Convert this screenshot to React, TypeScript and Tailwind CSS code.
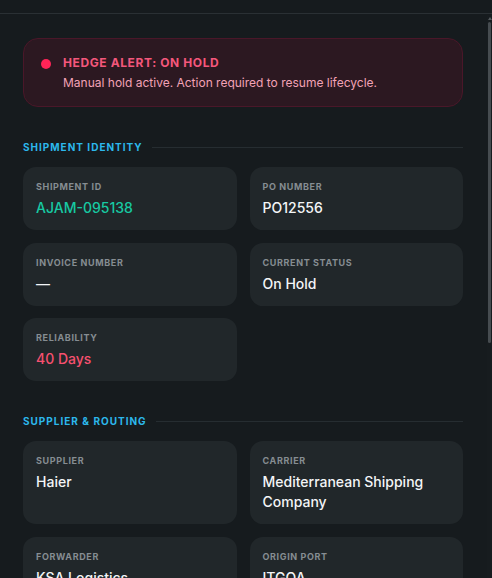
import React from "react";

type Field = {
  label: string;
  value: string;
  tone?: "teal" | "red";
};

const identity: (Field | null)[] = [
  { label: "Shipment ID", value: "AJAM-095138", tone: "teal" },
  { label: "PO Number", value: "PO12556" },
  { label: "Invoice Number", value: "—" },
  { label: "Current Status", value: "On Hold" },
  { label: "Reliability", value: "40 Days", tone: "red" },
];

const routing: Field[] = [
  { label: "Supplier", value: "Haier" },
  { label: "Carrier", value: "Mediterranean Shipping Company" },
  { label: "Forwarder", value: "KSA Logistics" },
  { label: "Origin Port", value: "ITGOA" },
  { label: "Destination Port", value: "SAJED" },
  { label: "Vessel", value: "MSC Aurora" },
];

function SectionHeading({ title }: { title: string }) {
  return (
    <div className="flex items-center gap-[9px]">
      <h3 className="shrink-0 text-[10px] leading-[14px] font-bold uppercase tracking-[0.1em] text-[#2cb8ec]">
        {title}
      </h3>
      <div className="h-px flex-1 bg-[#262d31]" />
    </div>
  );
}

function InfoCard({ label, value, tone }: Field) {
  const valueColor =
    tone === "teal"
      ? "text-[#17c9a2]"
      : tone === "red"
        ? "text-[#f7506f]"
        : "text-[#f3f5f7]";
  return (
    <div className="rounded-[13px] bg-[#21272a] px-[13px] pt-[14px] pb-[12px]">
      <p className="text-[9px] leading-[12px] font-bold uppercase tracking-[0.07em] text-[#868d92]">
        {label}
      </p>
      <p className={`mt-[5px] text-[14px] leading-[20px] font-medium ${valueColor}`}>
        {value}
      </p>
    </div>
  );
}

export default function App() {
  return (
    <div
      className="relative h-[578px] w-[492px] overflow-hidden bg-[#161b1e]"
      style={{ fontFamily: "Inter, 'Noto Sans', sans-serif" }}
    >
      <div className="h-[14px] border-b border-[#2a3034]" />

      <div className="pl-[23px] pr-[29px] pt-[24px]">
        <div className="flex items-start gap-[12px] rounded-[15px] border border-[#4a1729] bg-[#2c1821] pl-[17px] pr-4 pt-[16px] pb-[14px]">
          <span className="mt-[4px] size-[10px] shrink-0 rounded-full bg-[#ff2457]" />
          <div>
            <p className="text-[12px] leading-[16px] font-bold uppercase tracking-[0.05em] text-[#f4577c]">
              Hedge Alert: On Hold
            </p>
            <p className="mt-[3px] text-[12px] leading-[18px] text-[#f2a2b6]">
              Manual hold active. Action required to resume lifecycle.
            </p>
          </div>
        </div>

        <section className="mt-[33px]">
          <SectionHeading title="Shipment Identity" />
          <div className="mt-[13px] grid grid-cols-2 gap-x-[13px] gap-y-[12.5px]">
            {identity.map((f, i) =>
              f ? <InfoCard key={i} {...f} /> : <div key={i} />
            )}
          </div>
        </section>

        <section className="mt-[33px]">
          <SectionHeading title="Supplier & Routing" />
          <div className="mt-[13px] grid grid-cols-2 gap-x-[13px] gap-y-[12.5px]">
            {routing.map((f, i) => (
              <InfoCard key={i} {...f} />
            ))}
          </div>
        </section>
      </div>

      {/* scrollbar */}
      <div className="absolute top-[15px] right-0 h-[563px] w-[5px] bg-[#171c1f]">
        <div className="mx-auto mt-[2px] h-0 w-0 border-x-[2px] border-b-[3px] border-x-transparent border-b-[#555b5f]" />
        <div className="mt-[2px] ml-[1px] h-[321px] w-[3px] rounded-full bg-[#464c50]" />
      </div>
    </div>
  );
}
